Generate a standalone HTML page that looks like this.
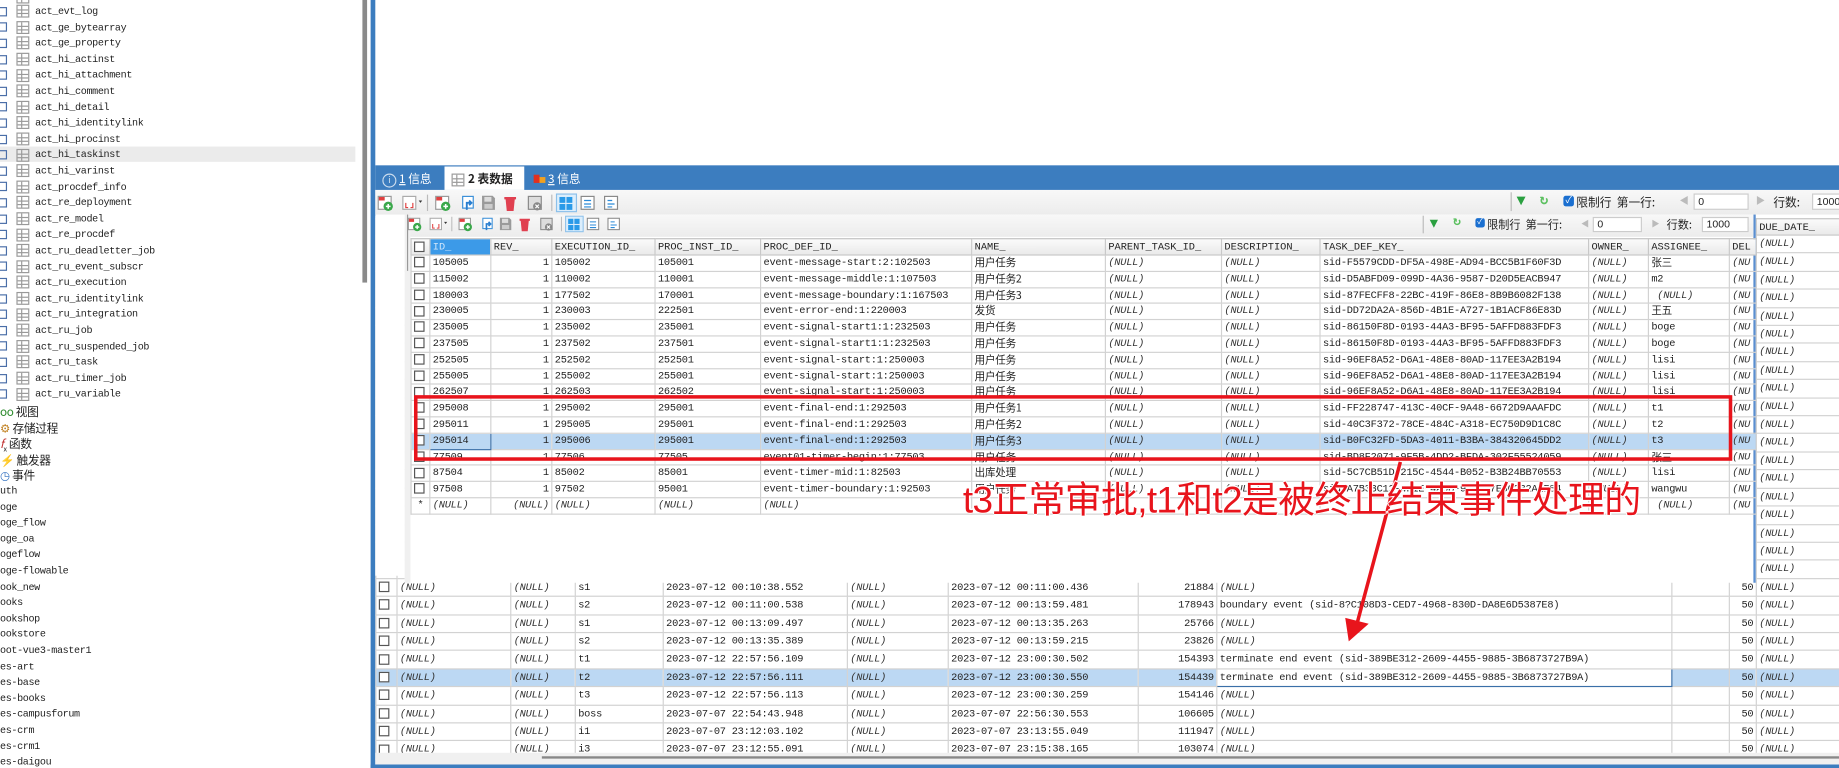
<!DOCTYPE html>
<html><head><meta charset="utf-8">
<style>
html,body{margin:0;padding:0;width:1839px;height:768px;overflow:hidden;background:#fff}
#w{position:absolute;left:0;top:0;width:1568px;height:655px;transform:scale(1.17283,1.17252);transform-origin:0 0;overflow:hidden;font-family:"Liberation Mono","Noto Sans CJK SC",monospace;font-size:9px;color:#222}
.a{position:absolute}
.tree div{position:absolute;left:0;height:13px;line-height:13px;white-space:nowrap;font-size:8.6px;letter-spacing:-0.3px}
.pl{display:inline-block;width:6px;height:6px;border:1px solid #4a6ea8;margin:0 6px 0 0;vertical-align:middle;position:relative;left:-2px}
.ti{display:inline-block;width:9px;height:9px;border:1px solid #999;margin-right:5px;vertical-align:middle;background:linear-gradient(#999,#999) 0 3px/100% 1px no-repeat,linear-gradient(#999,#999) 0 6px/100% 1px no-repeat,linear-gradient(#999,#999) 3px 0/1px 100% no-repeat}
table{border-collapse:collapse;table-layout:fixed;position:absolute}
td{border:1px solid #d2d2d2;padding:0 2px;white-space:nowrap;overflow:hidden;font-size:8.8px;letter-spacing:-0.2px}
.ov td{height:12.8px;line-height:12.8px}
.mg td{height:14.4px;line-height:14.4px}
th{font-weight:normal;text-align:left;border:1px solid #c8c8c8;background:linear-gradient(#fafafa,#e9e9e9);padding:0 2px;white-space:nowrap;overflow:hidden;font-size:8.8px;height:13px}
.n{font-style:italic;color:#333}
.r{text-align:right}
.cb{display:inline-block;width:7px;height:7px;border:1px solid #555;background:#fff;vertical-align:middle}
.sel td{background:#bcd8f3}
.cj{font-family:"Noto Sans CJK SC",sans-serif;font-size:9px}
.lbl{font-family:"Noto Sans CJK SC",sans-serif;font-size:10px;color:#222}
.inp{position:absolute;background:#fff;border:1px solid #ccc;font-size:9px;font-family:"Liberation Sans",sans-serif;padding-left:3px;box-sizing:border-box}
</style></head><body><div id="w">

<!-- left tree -->
<div class="a tree" style="left:0;top:0;width:305px;height:655px;background:#fff">
<div style="top:125px;width:303px;height:13px;background:#ebebeb"></div>
<div style="top:-8px;left:14px"><span class="ti"></span>act</div>
<div style="top:4px"><span class="pl"></span><span class="ti"></span>act_evt_log</div>
<div style="top:17.6px"><span class="pl"></span><span class="ti"></span>act_ge_bytearray</div>
<div style="top:31.2px"><span class="pl"></span><span class="ti"></span>act_ge_property</div>
<div style="top:44.8px"><span class="pl"></span><span class="ti"></span>act_hi_actinst</div>
<div style="top:58.4px"><span class="pl"></span><span class="ti"></span>act_hi_attachment</div>
<div style="top:72px"><span class="pl"></span><span class="ti"></span>act_hi_comment</div>
<div style="top:85.6px"><span class="pl"></span><span class="ti"></span>act_hi_detail</div>
<div style="top:99.2px"><span class="pl"></span><span class="ti"></span>act_hi_identitylink</div>
<div style="top:112.8px"><span class="pl"></span><span class="ti"></span>act_hi_procinst</div>
<div style="top:126.4px"><span class="pl"></span><span class="ti"></span>act_hi_taskinst</div>
<div style="top:140px"><span class="pl"></span><span class="ti"></span>act_hi_varinst</div>
<div style="top:153.6px"><span class="pl"></span><span class="ti"></span>act_procdef_info</div>
<div style="top:167.2px"><span class="pl"></span><span class="ti"></span>act_re_deployment</div>
<div style="top:180.8px"><span class="pl"></span><span class="ti"></span>act_re_model</div>
<div style="top:194.4px"><span class="pl"></span><span class="ti"></span>act_re_procdef</div>
<div style="top:208px"><span class="pl"></span><span class="ti"></span>act_ru_deadletter_job</div>
<div style="top:221.6px"><span class="pl"></span><span class="ti"></span>act_ru_event_subscr</div>
<div style="top:235.2px"><span class="pl"></span><span class="ti"></span>act_ru_execution</div>
<div style="top:248.8px"><span class="pl"></span><span class="ti"></span>act_ru_identitylink</div>
<div style="top:262.4px"><span class="pl"></span><span class="ti"></span>act_ru_integration</div>
<div style="top:276px"><span class="pl"></span><span class="ti"></span>act_ru_job</div>
<div style="top:289.6px"><span class="pl"></span><span class="ti"></span>act_ru_suspended_job</div>
<div style="top:303.2px"><span class="pl"></span><span class="ti"></span>act_ru_task</div>
<div style="top:316.8px"><span class="pl"></span><span class="ti"></span>act_ru_timer_job</div>
<div style="top:330.4px"><span class="pl"></span><span class="ti"></span>act_ru_variable</div>
<div style="top:344px;font-family:'Noto Sans CJK SC',sans-serif;font-size:10px"><span style="color:#2a8a2a">oo</span> 视图</div>
<div style="top:357.6px;font-family:'Noto Sans CJK SC',sans-serif;font-size:10px"><span style="color:#c08020">⚙</span> 存储过程</div>
<div style="top:371.2px;font-family:'Noto Sans CJK SC',sans-serif;font-size:10px"><span style="color:#c03030;font-style:italic">f</span><sub style="font-size:6px">x</sub> 函数</div>
<div style="top:384.8px;font-family:'Noto Sans CJK SC',sans-serif;font-size:10px"><span style="color:#d08000">⚡</span> 触发器</div>
<div style="top:398.4px;font-family:'Noto Sans CJK SC',sans-serif;font-size:10px"><span style="color:#3070c0">◷</span> 事件</div>
<div style="top:413px">uth</div>
<div style="top:426.6px">oge</div>
<div style="top:440.2px">oge_flow</div>
<div style="top:453.8px">oge_oa</div>
<div style="top:467.4px">ogeflow</div>
<div style="top:481px">oge-flowable</div>
<div style="top:494.6px">ook_new</div>
<div style="top:508.2px">ooks</div>
<div style="top:521.8px">ookshop</div>
<div style="top:535.4px">ookstore</div>
<div style="top:549px">oot-vue3-master1</div>
<div style="top:562.6px">es-art</div>
<div style="top:576.2px">es-base</div>
<div style="top:589.8px">es-books</div>
<div style="top:603.4px">es-campusforum</div>
<div style="top:617px">es-crm</div>
<div style="top:630.6px">es-crm1</div>
<div style="top:644.2px">es-daigou</div>
</div>
<div class="a" style="left:309px;top:0;width:4px;height:241px;background:#8a8a8a"></div>
<div class="a" style="left:316px;top:0;width:4px;height:655px;background:#3c7dbf"></div>
<div class="a" style="left:316px;top:652px;width:1252px;height:3px;background:#3c7dbf"></div>

<!-- tab bar -->
<div class="a" style="left:320px;top:141px;width:1248px;height:21px;background:#3c7dbf"></div>
<div class="a lbl" style="left:326px;top:144px;color:#fff;line-height:15px"><span style="display:inline-block;width:10px;height:10px;border:1px solid #cde;border-radius:50%;text-align:center;font-size:8px;line-height:10px;color:#cde">i</span> <u>1</u> 信息</div>
<div class="a" style="left:379px;top:142px;width:68px;height:20px;background:#fff"></div>
<div class="a lbl" style="left:385px;top:144px;line-height:15px;font-weight:bold"><span class="ti" style="margin-right:3px"></span>2 表数据</div>
<div class="a lbl" style="left:455px;top:144px;color:#fff;line-height:15px"><span style="display:inline-block;width:5px;height:7px;background:#e03020"></span><span style="display:inline-block;width:5px;height:5px;background:#f0a020"></span> <u>3</u> 信息</div>

<!-- main toolbar -->
<div class="a" style="left:320px;top:162px;width:1248px;height:21px;background:linear-gradient(#f8f8f8,#ececec)"></div>
<svg class="a" style="left:320px;top:164px" width="220" height="18" viewBox="0 0 220 18">
<g id="tb">
<rect x="2.5" y="3.5" width="11" height="11" fill="#fff" stroke="#999"/><rect x="3" y="4" width="5" height="3" fill="#e04040"/><circle cx="11" cy="12" r="4" fill="#3aa84a"/><path d="M9 12h4M11 10v4" stroke="#fff" stroke-width="1.3"/>
<rect x="23.5" y="3.5" width="11" height="11" fill="#fff" stroke="#aaa"/><path d="M26 9v4h2M32 9v4h-2" stroke="#e04040" fill="none"/><path d="M37 7l3 0l-1.5 2z" fill="#333"/>
<line x1="44.5" y1="2" x2="44.5" y2="16" stroke="#bbb"/>
<rect x="51.5" y="3.5" width="11" height="11" fill="#fff" stroke="#999"/><rect x="52" y="4" width="5" height="3" fill="#e04040"/><circle cx="60" cy="12" r="4" fill="#3aa84a"/><path d="M58 12h4M60 10v4" stroke="#fff" stroke-width="1.3"/>
<rect x="74.5" y="3.5" width="9" height="10" fill="#fff" stroke="#3a8fd8"/><path d="M78 15v-6h4M80 7l2 2-2 2" stroke="#2a7fd0" stroke-width="1.6" fill="none"/>
<path d="M91 3h9l2 2v10h-11z" fill="#9a9a9a"/><rect x="93" y="4" width="6" height="4" fill="#ddd"/><rect x="93" y="10" width="7" height="4" fill="#ccc"/>
<path d="M110 5h10M112 5l1 10h4l1-10" stroke="#e04050" stroke-width="2" fill="#e04050"/>
<rect x="130.5" y="3.5" width="11" height="11" fill="#ddd" stroke="#888"/><circle cx="138" cy="12" r="3.5" fill="#888"/><path d="M136.5 10.5l3 3M139.5 10.5l-3 3" stroke="#fff"/>
<line x1="150.5" y1="2" x2="150.5" y2="16" stroke="#bbb"/>
<rect x="154.5" y="1.5" width="17" height="15" fill="#dceefc" stroke="#8cc0ea"/><rect x="157" y="4" width="5" height="5" fill="#2a9ae8"/><rect x="163" y="4" width="5" height="5" fill="#2a9ae8"/><rect x="157" y="10" width="5" height="5" fill="#2a9ae8"/><rect x="163" y="10" width="5" height="5" fill="#2a9ae8"/>
<rect x="175.5" y="3.5" width="11" height="11" fill="#fff" stroke="#888"/><path d="M178 7h6M178 10h6M178 12.5h6" stroke="#2a8ad8"/>
<rect x="195.5" y="3.5" width="11" height="11" fill="#fff" stroke="#888"/><path d="M198 7h4M198 10h6M198 12.5h4" stroke="#2a8ad8"/>
</g></svg>
<div class="a" style="left:1288px;top:164px;width:1px;height:16px;background:#bbb"></div>
<div class="a" style="left:1293px;top:165px;color:#2aa040;font-size:13px;line-height:14px">▼</div>
<div class="a" style="left:1313px;top:164px;color:#5cc060;font-size:12px;line-height:15px;font-weight:bold">↻</div>
<div class="a" style="left:1333px;top:167px;width:9px;height:9px;background:#1a6fd0;border-radius:2px;color:#fff;font-size:8px;line-height:9px;text-align:center">✓</div>
<div class="a lbl" style="left:1344px;top:165px;line-height:14px">限制行&nbsp;&nbsp;第一行:</div>
<div class="a" style="left:1432px;top:166px;color:#bbb;font-size:8px">◀</div>
<div class="inp" style="left:1444px;top:165px;width:47px;height:14px;line-height:12px">0</div>
<div class="a" style="left:1497px;top:166px;color:#bbb;font-size:8px">▶</div>
<div class="a lbl" style="left:1512px;top:165px;line-height:14px">行数:</div>
<div class="inp" style="left:1545px;top:165px;width:30px;height:14px;line-height:12px">1000</div>

<!-- main grid -->
<table class="mg" style="left:320px;top:186px;width:1270px">
<colgroup><col style="width:18px"><col style="width:97px"><col style="width:55px"><col style="width:75px"><col style="width:157px"><col style="width:86px"><col style="width:162px"><col style="width:67px"><col style="width:388px"><col style="width:49px"><col style="width:23px"><col style="width:93px"></colgroup>
<tr><th></th><th></th><th></th><th></th><th></th><th></th><th></th><th></th><th></th><th></th><th></th><th>DUE_DATE_</th></tr>
<tr><td></td><td></td><td></td><td></td><td></td><td></td><td></td><td></td><td></td><td></td><td class="r">50</td><td class="n">(NULL)</td></tr>
<tr><td></td><td></td><td></td><td></td><td></td><td></td><td></td><td></td><td></td><td></td><td class="r">50</td><td class="n">(NULL)</td></tr>
<tr><td></td><td></td><td></td><td></td><td></td><td></td><td></td><td></td><td></td><td></td><td class="r">50</td><td class="n">(NULL)</td></tr>
<tr><td></td><td></td><td></td><td></td><td></td><td></td><td></td><td></td><td></td><td></td><td class="r">50</td><td class="n">(NULL)</td></tr>
<tr><td></td><td></td><td></td><td></td><td></td><td></td><td></td><td></td><td></td><td></td><td class="r">50</td><td class="n">(NULL)</td></tr>
<tr><td></td><td></td><td></td><td></td><td></td><td></td><td></td><td></td><td></td><td></td><td class="r">50</td><td class="n">(NULL)</td></tr>
<tr><td></td><td></td><td></td><td></td><td></td><td></td><td></td><td></td><td></td><td></td><td class="r">50</td><td class="n">(NULL)</td></tr>
<tr><td></td><td></td><td></td><td></td><td></td><td></td><td></td><td></td><td></td><td></td><td class="r">50</td><td class="n">(NULL)</td></tr>
<tr><td></td><td></td><td></td><td></td><td></td><td></td><td></td><td></td><td></td><td></td><td class="r">50</td><td class="n">(NULL)</td></tr>
<tr><td></td><td></td><td></td><td></td><td></td><td></td><td></td><td></td><td></td><td></td><td class="r">50</td><td class="n">(NULL)</td></tr>
<tr><td></td><td></td><td></td><td></td><td></td><td></td><td></td><td></td><td></td><td></td><td class="r">50</td><td class="n">(NULL)</td></tr>
<tr><td></td><td></td><td></td><td></td><td></td><td></td><td></td><td></td><td></td><td></td><td class="r">50</td><td class="n">(NULL)</td></tr>
<tr><td></td><td></td><td></td><td></td><td></td><td></td><td></td><td></td><td></td><td></td><td class="r">50</td><td class="n">(NULL)</td></tr>
<tr><td></td><td></td><td></td><td></td><td></td><td></td><td></td><td></td><td></td><td></td><td class="r">50</td><td class="n">(NULL)</td></tr>
<tr><td></td><td></td><td></td><td></td><td></td><td></td><td></td><td></td><td></td><td></td><td class="r">50</td><td class="n">(NULL)</td></tr>
<tr><td></td><td></td><td></td><td></td><td></td><td></td><td></td><td></td><td></td><td></td><td class="r">50</td><td class="n">(NULL)</td></tr>
<tr><td></td><td></td><td></td><td></td><td></td><td></td><td></td><td></td><td></td><td></td><td class="r">50</td><td class="n">(NULL)</td></tr>
<tr><td></td><td></td><td></td><td></td><td></td><td></td><td></td><td></td><td></td><td></td><td class="r">50</td><td class="n">(NULL)</td></tr>
<tr><td></td><td></td><td></td><td></td><td></td><td></td><td></td><td></td><td></td><td></td><td class="r">50</td><td class="n">(NULL)</td></tr>
<tr><td><span class="cb"></span></td><td class="n">(NULL)</td><td class="n">(NULL)</td><td>s1</td><td>2023-07-12 00:10:38.552</td><td class="n">(NULL)</td><td>2023-07-12 00:11:00.436</td><td class="r">21884</td><td class="n">(NULL)</td><td></td><td class="r">50</td><td class="n">(NULL)</td></tr>
<tr><td><span class="cb"></span></td><td class="n">(NULL)</td><td class="n">(NULL)</td><td>s2</td><td>2023-07-12 00:11:00.538</td><td class="n">(NULL)</td><td>2023-07-12 00:13:59.481</td><td class="r">178943</td><td>boundary event (sid-8?C108D3-CED7-4968-830D-DA8E6D5387E8)</td><td></td><td class="r">50</td><td class="n">(NULL)</td></tr>
<tr><td><span class="cb"></span></td><td class="n">(NULL)</td><td class="n">(NULL)</td><td>s1</td><td>2023-07-12 00:13:09.497</td><td class="n">(NULL)</td><td>2023-07-12 00:13:35.263</td><td class="r">25766</td><td class="n">(NULL)</td><td></td><td class="r">50</td><td class="n">(NULL)</td></tr>
<tr><td><span class="cb"></span></td><td class="n">(NULL)</td><td class="n">(NULL)</td><td>s2</td><td>2023-07-12 00:13:35.389</td><td class="n">(NULL)</td><td>2023-07-12 00:13:59.215</td><td class="r">23826</td><td class="n">(NULL)</td><td></td><td class="r">50</td><td class="n">(NULL)</td></tr>
<tr><td><span class="cb"></span></td><td class="n">(NULL)</td><td class="n">(NULL)</td><td>t1</td><td>2023-07-12 22:57:56.109</td><td class="n">(NULL)</td><td>2023-07-12 23:00:30.502</td><td class="r">154393</td><td>terminate end event (sid-389BE312-2609-4455-9885-3B6873727B9A)</td><td></td><td class="r">50</td><td class="n">(NULL)</td></tr>
<tr class="sel"><td><span class="cb"></span></td><td class="n">(NULL)</td><td class="n">(NULL)</td><td>t2</td><td>2023-07-12 22:57:56.111</td><td class="n">(NULL)</td><td>2023-07-12 23:00:30.550</td><td class="r">154439</td><td style="border:1px solid #3a6fa8;background:#fff">terminate end event (sid-389BE312-2609-4455-9885-3B6873727B9A)</td><td></td><td class="r">50</td><td class="n">(NULL)</td></tr>
<tr><td><span class="cb"></span></td><td class="n">(NULL)</td><td class="n">(NULL)</td><td>t3</td><td>2023-07-12 22:57:56.113</td><td class="n">(NULL)</td><td>2023-07-12 23:00:30.259</td><td class="r">154146</td><td class="n">(NULL)</td><td></td><td class="r">50</td><td class="n">(NULL)</td></tr>
<tr><td><span class="cb"></span></td><td class="n">(NULL)</td><td class="n">(NULL)</td><td>boss</td><td>2023-07-07 22:54:43.948</td><td class="n">(NULL)</td><td>2023-07-07 22:56:30.553</td><td class="r">106605</td><td class="n">(NULL)</td><td></td><td class="r">50</td><td class="n">(NULL)</td></tr>
<tr><td><span class="cb"></span></td><td class="n">(NULL)</td><td class="n">(NULL)</td><td>i1</td><td>2023-07-07 23:12:03.102</td><td class="n">(NULL)</td><td>2023-07-07 23:13:55.049</td><td class="r">111947</td><td class="n">(NULL)</td><td></td><td class="r">50</td><td class="n">(NULL)</td></tr>
<tr><td><span class="cb"></span></td><td class="n">(NULL)</td><td class="n">(NULL)</td><td>i3</td><td>2023-07-07 23:12:55.091</td><td class="n">(NULL)</td><td>2023-07-07 23:15:38.165</td><td class="r">103074</td><td class="n">(NULL)</td><td></td><td class="r">50</td><td class="n">(NULL)</td></tr>
</table>
<!-- bottom scrollbar area -->
<div class="a" style="left:320px;top:642px;width:1248px;height:10px;background:#f0f0f0"></div>
<div class="a" style="left:462px;top:645px;width:1106px;height:2px;background:#888"></div>
<!-- left strip under tab -->
<div class="a" style="left:320px;top:184px;width:25px;height:307px;background:#fff"></div>

<!-- overlay window -->
<div class="a" style="left:345px;top:183px;width:1152px;height:314px;background:#fff;border-right:2px solid #5b8fd0;box-sizing:border-box"></div>
<div class="a" style="left:345px;top:183px;width:5px;height:314px;background:#f0f0f0"></div>
<div class="a" style="left:347px;top:183px;width:1px;height:48px;background:#999"></div>
<div class="a" style="left:350px;top:183px;width:1145px;height:19px;background:linear-gradient(#f8f8f8,#ececec)"></div>
<svg class="a" style="left:346px;top:183px" width="194" height="16" viewBox="0 0 220 18">
<use href="#tb"/></svg>
<div class="a" style="left:1213px;top:184px;width:1px;height:15px;background:#bbb"></div>
<div class="a" style="left:1219px;top:184px;color:#2aa040;font-size:12px;line-height:14px">▼</div>
<div class="a" style="left:1239px;top:183px;color:#5cc060;font-size:11px;line-height:15px;font-weight:bold">↻</div>
<div class="a" style="left:1258px;top:186px;width:8px;height:8px;background:#1a6fd0;border-radius:2px;color:#fff;font-size:7px;line-height:8px;text-align:center">✓</div>
<div class="a lbl" style="left:1268px;top:184px;line-height:14px;font-size:9.5px">限制行&nbsp;&nbsp;第一行:</div>
<div class="a" style="left:1348px;top:186px;color:#bbb;font-size:7px">◀</div>
<div class="inp" style="left:1358px;top:185px;width:42px;height:13px;line-height:11px">0</div>
<div class="a" style="left:1408px;top:186px;color:#bbb;font-size:7px">▶</div>
<div class="a lbl" style="left:1421px;top:184px;line-height:14px;font-size:9.5px">行数:</div>
<div class="inp" style="left:1451px;top:185px;width:40px;height:13px;line-height:11px">1000</div>

<table class="ov" style="left:350px;top:203px;width:1147px">
<colgroup><col style="width:16px"><col style="width:52px"><col style="width:52px"><col style="width:88px"><col style="width:90px"><col style="width:180px"><col style="width:114px"><col style="width:99px"><col style="width:84px"><col style="width:229px"><col style="width:51px"><col style="width:69px"><col style="width:23px"></colgroup>
<tr><th><span class="cb"></span></th><th style="background:#3c9ae8;color:#cfe6fb">ID_</th><th>REV_</th><th>EXECUTION_ID_</th><th>PROC_INST_ID_</th><th>PROC_DEF_ID_</th><th>NAME_</th><th>PARENT_TASK_ID_</th><th>DESCRIPTION_</th><th>TASK_DEF_KEY_</th><th>OWNER_</th><th>ASSIGNEE_</th><th>DEL</th></tr>
<tr><td><span class="cb"></span></td><td>105005</td><td class="r">1</td><td>105002</td><td>105001</td><td>event-message-start:2:102503</td><td class="cj">用户任务</td><td class="n">(NULL)</td><td class="n">(NULL)</td><td>sid-F5579CDD-DF5A-498E-AD94-BCC5B1F60F3D</td><td class="n">(NULL)</td><td class="cj">张三</td><td class="n">(NU</td></tr>
<tr><td><span class="cb"></span></td><td>115002</td><td class="r">1</td><td>110002</td><td>110001</td><td>event-message-middle:1:107503</td><td class="cj">用户任务2</td><td class="n">(NULL)</td><td class="n">(NULL)</td><td>sid-D5ABFD09-099D-4A36-9587-D20D5EACB947</td><td class="n">(NULL)</td><td>m2</td><td class="n">(NU</td></tr>
<tr><td><span class="cb"></span></td><td>180003</td><td class="r">1</td><td>177502</td><td>170001</td><td>event-message-boundary:1:167503</td><td class="cj">用户任务3</td><td class="n">(NULL)</td><td class="n">(NULL)</td><td>sid-87FECFF8-22BC-419F-86E8-8B9B6082F138</td><td class="n">(NULL)</td><td class="n">&nbsp;(NULL)</td><td class="n">(NU</td></tr>
<tr><td><span class="cb"></span></td><td>230005</td><td class="r">1</td><td>230003</td><td>222501</td><td>event-error-end:1:220003</td><td class="cj">发货</td><td class="n">(NULL)</td><td class="n">(NULL)</td><td>sid-DD72DA2A-856D-4B1E-A727-1B1ACF86E83D</td><td class="n">(NULL)</td><td class="cj">王五</td><td class="n">(NU</td></tr>
<tr><td><span class="cb"></span></td><td>235005</td><td class="r">1</td><td>235002</td><td>235001</td><td>event-signal-start1:1:232503</td><td class="cj">用户任务</td><td class="n">(NULL)</td><td class="n">(NULL)</td><td>sid-86150F8D-0193-44A3-BF95-5AFFD883FDF3</td><td class="n">(NULL)</td><td>boge</td><td class="n">(NU</td></tr>
<tr><td><span class="cb"></span></td><td>237505</td><td class="r">1</td><td>237502</td><td>237501</td><td>event-signal-start1:1:232503</td><td class="cj">用户任务</td><td class="n">(NULL)</td><td class="n">(NULL)</td><td>sid-86150F8D-0193-44A3-BF95-5AFFD883FDF3</td><td class="n">(NULL)</td><td>boge</td><td class="n">(NU</td></tr>
<tr><td><span class="cb"></span></td><td>252505</td><td class="r">1</td><td>252502</td><td>252501</td><td>event-signal-start:1:250003</td><td class="cj">用户任务</td><td class="n">(NULL)</td><td class="n">(NULL)</td><td>sid-96EF8A52-D6A1-48E8-80AD-117EE3A2B194</td><td class="n">(NULL)</td><td>lisi</td><td class="n">(NU</td></tr>
<tr><td><span class="cb"></span></td><td>255005</td><td class="r">1</td><td>255002</td><td>255001</td><td>event-signal-start:1:250003</td><td class="cj">用户任务</td><td class="n">(NULL)</td><td class="n">(NULL)</td><td>sid-96EF8A52-D6A1-48E8-80AD-117EE3A2B194</td><td class="n">(NULL)</td><td>lisi</td><td class="n">(NU</td></tr>
<tr><td><span class="cb"></span></td><td>262507</td><td class="r">1</td><td>262503</td><td>262502</td><td>event-signal-start:1:250003</td><td class="cj">用户任务</td><td class="n">(NULL)</td><td class="n">(NULL)</td><td>sid-96EF8A52-D6A1-48E8-80AD-117EE3A2B194</td><td class="n">(NULL)</td><td>lisi</td><td class="n">(NU</td></tr>
<tr><td><span class="cb"></span></td><td>295008</td><td class="r">1</td><td>295002</td><td>295001</td><td>event-final-end:1:292503</td><td class="cj">用户任务1</td><td class="n">(NULL)</td><td class="n">(NULL)</td><td>sid-FF228747-413C-40CF-9A48-6672D9AAAFDC</td><td class="n">(NULL)</td><td>t1</td><td class="n">(NU</td></tr>
<tr><td><span class="cb"></span></td><td>295011</td><td class="r">1</td><td>295005</td><td>295001</td><td>event-final-end:1:292503</td><td class="cj">用户任务2</td><td class="n">(NULL)</td><td class="n">(NULL)</td><td>sid-40C3F372-78CE-484C-A318-EC750D9D1C8C</td><td class="n">(NULL)</td><td>t2</td><td class="n">(NU</td></tr>
<tr class="sel"><td><span class="cb"></span></td><td style="border:1px solid #3a6fa8">295014</td><td class="r">1</td><td>295006</td><td>295001</td><td>event-final-end:1:292503</td><td class="cj">用户任务3</td><td class="n">(NULL)</td><td class="n">(NULL)</td><td>sid-B0FC32FD-5DA3-4011-B3BA-384320645DD2</td><td class="n">(NULL)</td><td>t3</td><td class="n">(NU</td></tr>
<tr><td><span class="cb"></span></td><td>77509</td><td class="r">1</td><td>77506</td><td>77505</td><td>event01-timer-begin:1:77503</td><td class="cj">用户任务</td><td class="n">(NULL)</td><td class="n">(NULL)</td><td>sid-BD8F2071-9F5B-4DD2-BFDA-302F55524059</td><td class="n">(NULL)</td><td class="cj">张三</td><td class="n">(NU</td></tr>
<tr><td><span class="cb"></span></td><td>87504</td><td class="r">1</td><td>85002</td><td>85001</td><td>event-timer-mid:1:82503</td><td class="cj">出库处理</td><td class="n">(NULL)</td><td class="n">(NULL)</td><td>sid-5C7CB51D-215C-4544-B052-B3B24BB70553</td><td class="n">(NULL)</td><td>lisi</td><td class="n">(NU</td></tr>
<tr><td><span class="cb"></span></td><td>97508</td><td class="r">1</td><td>97502</td><td>95001</td><td>event-timer-boundary:1:92503</td><td class="cj">用户任务</td><td class="n">(NULL)</td><td class="n">(NULL)</td><td>sid-A7B33C12-4F1E-4A0B-9D21-7E5C3B2A1F84</td><td class="n">(NULL)</td><td>wangwu</td><td class="n">(NU</td></tr>
<tr><td style="text-align:center">*</td><td class="n">(NULL)</td><td class="n r">(NULL)</td><td class="n">(NULL)</td><td class="n">(NULL)</td><td class="n">(NULL)</td><td></td><td></td><td></td><td></td><td></td><td class="n">&nbsp;(NULL)</td><td class="n">(NU</td></tr>
</table>

<!-- annotation -->
<div class="a" style="left:353px;top:337px;width:1124px;height:56px;border:3px solid #e8141c;box-sizing:border-box"></div>
<svg class="a" style="left:0;top:0" width="1568" height="655">
<line x1="1194" y1="394" x2="1157" y2="532" stroke="#e8141c" stroke-width="3"/>
<path d="M1150 547 L1147 527 L1167 532 Z" fill="#e8141c"/>
</svg>
<div class="a" style="left:821px;top:407px;font-family:'Liberation Sans','Noto Sans CJK SC',sans-serif;font-size:31.5px;line-height:38px;color:#e8141c;white-space:nowrap;letter-spacing:-0.6px;text-shadow:-1px 0 #fff,1px 0 #fff,0 -1px #fff,0 1px #fff">t3正常审批,t1和t2是被终止结束事件处理的</div>

</div></body></html>
